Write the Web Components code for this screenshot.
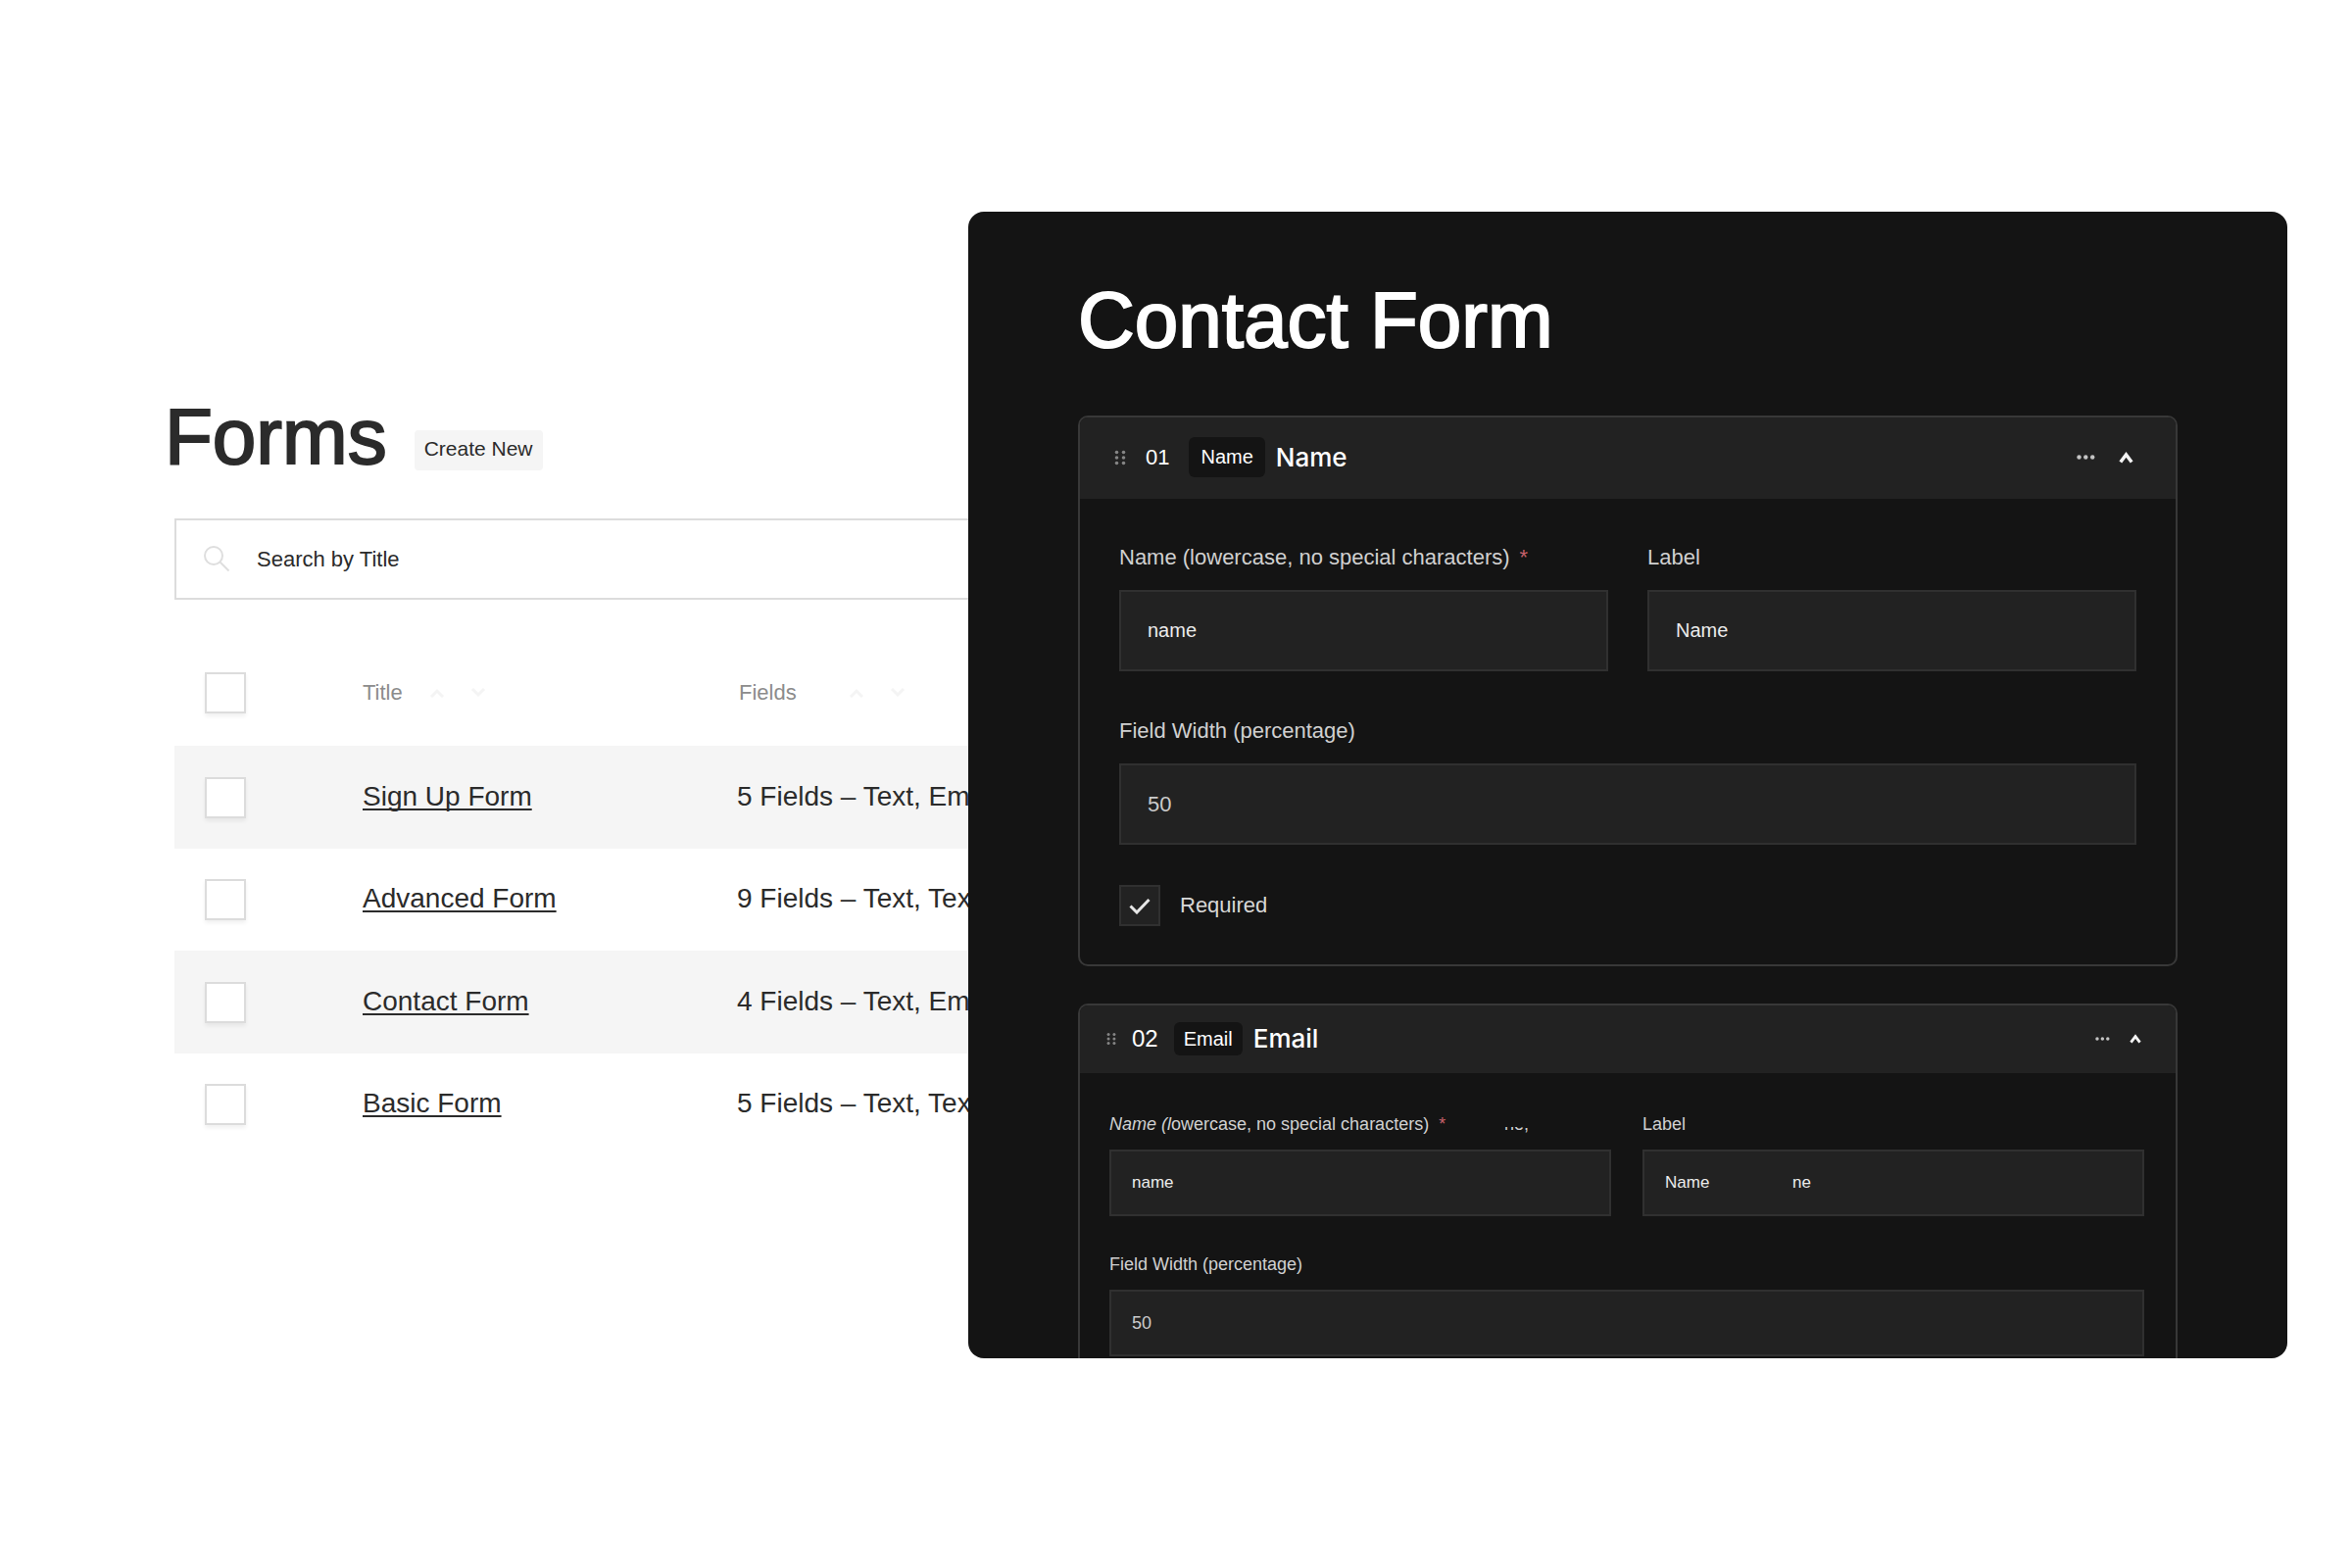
<!DOCTYPE html>
<html lang="en">
<head>
<meta charset="utf-8">
<title>Form Builder</title>
<style>
  body {
    margin: 0;
    background: #fff;
    color: #2b2b2b;
    font-family: "Liberation Sans", Arial, sans-serif;
    font-size: 22px;
  }
</style>
</head>
<body>
<form-builder-page>
  <forms-list slot="list"></forms-list>
  <form-panel slot="panel" heading="Contact Form">
    <block-card number="01" kind="Name" heading="Name">
      <text-field label="Name (lowercase, no special characters)" value="name" required></text-field>
      <text-field label="Label" value="Name"></text-field>
      <text-field class="wide" label="Field Width (percentage)" value="50" numeric></text-field>
      <check-field class="wide" label="Required"></check-field>
    </block-card>
    <block-card number="02" kind="Email" heading="Email" compact>
      <text-field label="Name (lowercase, no special characters)" value="name" required slanted label-echo="ne,"></text-field>
      <text-field label="Label" value="Name" value-echo="ne"></text-field>
      <text-field class="wide" label="Field Width (percentage)" value="50" numeric></text-field>
    </block-card>
  </form-panel>
</form-builder-page>

<script>
  class Base extends HTMLElement {
    connectedCallback() {
      if (!this.shadowRoot) this.attachShadow({ mode: 'open' }).innerHTML = this.render();
    }
    attr(name) { return this.getAttribute(name) || ''; }
  }

  customElements.define('form-builder-page', class extends Base {
    render() {
      return `
      <style>
        :host {
          display: grid;
          grid-template-columns: 988fr 1346fr 66fr;
          align-content: center;
          box-sizing: border-box;
          min-height: 100vh;
          padding-top: 2px;
        }
        ::slotted(*) { min-width: 0; }
      </style>
      <slot name="list"></slot>
      <slot name="panel"></slot>`;
    }
  });

  customElements.define('sort-arrows', class extends Base {
    render() {
      return `
      <style>
        :host { display: inline-flex; gap: 28px; }
        button { all: unset; display: block; width: 14px; height: 10px; }
        svg { display: block; fill: none; stroke: #f4f4f4; stroke-width: 3; }
      </style>
      <button type="button" aria-label="Sort ascending"><svg width="14" height="10" viewBox="0 0 14 10"><path d="M1 9 7 3l6 6"/></svg></button>
      <button type="button" aria-label="Sort descending"><svg width="14" height="10" viewBox="0 0 14 10"><path d="M1 1l6 6 6-6"/></svg></button>`;
    }
  });

  customElements.define('search-box', class extends Base {
    render() {
      return `
      <style>
        :host {
          display: flex;
          align-items: center;
          gap: 27px;
          box-sizing: border-box;
          height: 83px;
          padding-left: 28px;
          border: 2px solid #dcdcdc;
          border-right: 0;
        }
        svg { flex: none; fill: none; stroke: #dedede; stroke-width: 2; }
        input {
          flex: 1;
          min-width: 0;
          padding: 0;
          border: 0;
          outline: 0;
          background: none;
          font: inherit;
          color: inherit;
        }
        input::placeholder { color: #2b2b2b; opacity: 1; }
      </style>
      <svg width="27" height="27" viewBox="0 0 27 27" aria-hidden="true"><circle cx="10" cy="10" r="9"/><path d="M16.500 16.500 25.500 25.500"/></svg>
      <input type="text" placeholder="Search by Title" aria-label="Search by Title">`;
    }
  });

  customElements.define('forms-list', class extends Base {
    render() {
      const forms = [
        ['Sign Up Form', '5 Fields – Text, Ema'],
        ['Advanced Form', '9 Fields – Text, Tex'],
        ['Contact Form', '4 Fields – Text, Ema'],
        ['Basic Form', '5 Fields – Text, Tex']
      ];
      return `
      <style>
        :host { display: block; overflow: hidden; padding: 196px 0 0 178px; }
        header { display: flex; align-items: flex-end; gap: 28px; margin: 0 0 49px -10px; }
        h1 {
          margin: 0;
          font-size: 80px;
          line-height: 68px;
          font-weight: 400;
          -webkit-text-stroke: 2px;
        }
        header button {
          height: 41px;
          padding: 0 10px 4px;
          border: 0;
          border-radius: 4px;
          background: #f5f5f5;
          color: inherit;
          font: 21px "Liberation Sans", Arial, sans-serif;
        }
        table { width: 100%; margin-top: 41px; border-collapse: collapse; table-layout: fixed; }
        th, td { padding: 0; text-align: left; vertical-align: middle; font-weight: 400; white-space: nowrap; }
        thead tr { height: 108px; color: #8c8c8c; }
        tbody tr { height: 104px; font-size: 28px; }
        tbody tr:nth-child(odd) { height: 105px; background: #f5f5f5; }
        tbody td + td { padding-bottom: 2px; }
        .pick { width: 192px; }
        .title { width: 382px; }
        .head { display: flex; align-items: center; }
        .title .head { gap: 28px; }
        .fields .head { gap: 54px; padding-left: 2px; }
        input {
          appearance: none;
          display: block;
          box-sizing: border-box;
          width: 42px;
          height: 42px;
          margin: 0 0 0 31px;
          border: 2px solid #dcdcdc;
          background: #fff;
          box-shadow: 0 3px 4px rgba(0, 0, 0, .06);
        }
        a {
          color: inherit;
          text-decoration: underline 2px;
          text-underline-offset: 3px;
          text-decoration-skip-ink: none;
        }
      </style>
      <header><h1>Forms</h1><button type="button">Create New</button></header>
      <search-box></search-box>
      <table>
        <thead><tr>
          <th class="pick"><input type="checkbox" aria-label="Select all"></th>
          <th class="title"><div class="head">Title<sort-arrows></sort-arrows></div></th>
          <th class="fields"><div class="head">Fields<sort-arrows></sort-arrows></div></th>
        </tr></thead>
        <tbody>${forms.map(([title, fields]) => `
          <tr>
            <td><input type="checkbox" aria-label="Select ${title}"></td>
            <td><a href="#">${title}</a></td>
            <td>${fields}</td>
          </tr>`).join('')}
        </tbody>
      </table>`;
    }
  });

  customElements.define('form-panel', class extends Base {
    render() {
      return `
      <style>
        :host {
          display: block;
          box-sizing: border-box;
          overflow: hidden;
          padding: 63px 112px 0;
          border-radius: 16px;
          background: #141414;
          color: #fff;
        }
        h2 {
          margin: 0 0 49px;
          font-size: 80px;
          line-height: 96px;
          font-weight: 400;
          -webkit-text-stroke: 2px;
        }
        .blocks { display: grid; gap: 38px; }
      </style>
      <h2>${this.attr('heading')}</h2>
      <div class="blocks"><slot></slot></div>`;
    }
  });

  customElements.define('block-card', class extends Base {
    render() {
      return `
      <style>
        :host {
          --label-size: 22px;
          --label-line: 26px;
          --label-gap: 20px;
          --value-size: 20px;
          --number-size: 22px;
          --input-height: 83px;
          --input-pad: 27px;
          display: block;
          border: 2px solid #383838;
          border-radius: 10px;
          overflow: hidden;
        }
        :host([compact]) {
          --label-size: 18px;
          --label-line: 22px;
          --label-gap: 15px;
          --value-size: 17px;
          --number-size: 18px;
          --input-height: 68px;
          --input-pad: 21px;
          border-bottom: 0;
          border-radius: 10px 10px 0 0;
        }
        header {
          display: flex;
          align-items: center;
          gap: 20px;
          box-sizing: border-box;
          height: 83px;
          padding: 0 43px 2px 35px;
          background: #222;
        }
        .name { display: flex; align-items: center; gap: 11px; }
        .badge {
          padding: 0 12px;
          border-radius: 6px;
          background: #141414;
          font-size: 20px;
          line-height: 41px;
        }
        h3 { margin: 0; font: 500 26px/32px Inter, "Liberation Sans", sans-serif; }
        .tools { display: flex; align-items: center; gap: 24px; margin-left: auto; }
        button { all: unset; display: block; }
        svg { display: block; }
        .grip { fill: #858585; width: 12px; height: 16px; }
        .dots { fill: #c4c4c4; width: 19px; height: 5px; }
        .fold { fill: none; stroke: #f4f4f4; stroke-width: 3.500; width: 15px; height: 12px; }
        .body {
          display: grid;
          grid-template-columns: repeat(2, minmax(0, 1fr));
          gap: 48px 40px;
          padding: 47px 40px 39px;
        }
        ::slotted(.wide) { grid-column: 1 / -1; }
        ::slotted(check-field) { margin-top: -7px; }
        :host([compact]) header { gap: 16px; height: 69px; padding: 0 35px 2px 27px; }
        :host([compact]) .number { font-size: 24px; }
        :host([compact]) .badge { padding: 0 10px; line-height: 34px; }
        :host([compact]) .tools { gap: 20px; }
        :host([compact]) .grip { width: 10px; height: 14px; }
        :host([compact]) .dots { width: 15px; height: 4px; }
        :host([compact]) .fold { width: 12px; height: 10px; }
        :host([compact]) .body { gap: 38px 32px; padding: 41px 32px 2px 30px; }
      </style>
      <header>
        <svg class="grip" viewBox="0 0 12 16" aria-hidden="true"><circle cx="2.500" cy="2.500" r="1.800"/><circle cx="9.500" cy="2.500" r="1.800"/><circle cx="2.500" cy="8" r="1.800"/><circle cx="9.500" cy="8" r="1.800"/><circle cx="2.500" cy="13.500" r="1.800"/><circle cx="9.500" cy="13.500" r="1.800"/></svg>
        <span class="number">${this.attr('number')}</span>
        <div class="name"><span class="badge">${this.attr('kind')}</span><h3>${this.attr('heading')}</h3></div>
        <div class="tools">
          <button type="button" aria-label="More"><svg class="dots" viewBox="0 0 19 5"><circle cx="2.500" cy="2.500" r="2.200"/><circle cx="9.300" cy="2.500" r="2.200"/><circle cx="16.200" cy="2.500" r="2.200"/></svg></button>
          <button type="button" aria-label="Collapse"><svg class="fold" viewBox="0 0 15 12"><path d="M1.800 10.500 7.500 3l5.700 7.500"/></svg></button>
        </div>
      </header>
      <div class="body"><slot></slot></div>`;
    }
  });

  customElements.define('text-field', class extends Base {
    render() {
      const label = this.attr('label');
      const text = this.hasAttribute('slanted')
        ? label.replace(/^(Name \(l)/, '<i>$1</i>')
        : label;
      const star = this.hasAttribute('required') ? '<span class="star">*</span>' : '';
      const labelEcho = this.attr('label-echo');
      const valueEcho = this.attr('value-echo');
      return `
      <style>
        :host { display: flex; flex-direction: column; gap: var(--label-gap); }
        .caption { position: relative; font-size: var(--label-size); line-height: var(--label-line); color: #d0d0d0; }
        .star { margin-left: 10px; color: #c4606a; }
        .box { position: relative; display: flex; }
        input {
          flex: 1;
          min-width: 0;
          box-sizing: border-box;
          height: var(--input-height);
          padding: 0 var(--input-pad);
          border: 2px solid #303030;
          border-radius: 0;
          outline: 0;
          background: #222;
          color: #ececec;
          font: var(--value-size) "Liberation Sans", Arial, sans-serif;
        }
        :host([numeric]) input { color: #cbcbcb; font-size: var(--number-size); }
        .label-echo { position: absolute; left: 403px; bottom: 0; height: 8px; overflow: hidden; }
        .label-echo span { display: block; margin-top: -14px; }
        .value-echo { position: absolute; left: 153px; top: 0; font-size: var(--value-size); line-height: var(--input-height); color: #ececec; }
      </style>
      <div class="caption">
        <label for="value">${text}${star}</label>
        ${labelEcho && `<div class="label-echo" aria-hidden="true"><span>${labelEcho}</span></div>`}
      </div>
      <div class="box">
        <input id="value" type="text" value="${this.attr('value')}">
        ${valueEcho && `<span class="value-echo" aria-hidden="true">${valueEcho}</span>`}
      </div>`;
    }
  });

  customElements.define('check-field', class extends Base {
    render() {
      return `
      <style>
        :host { display: flex; align-items: center; gap: 20px; color: #d8d8d8; }
        .box { display: grid; }
        .box > * { grid-area: 1 / 1; place-self: center; }
        input {
          appearance: none;
          box-sizing: border-box;
          width: 42px;
          height: 42px;
          margin: 0;
          border: 2px solid #303030;
          background: #222;
        }
        svg { z-index: 1; pointer-events: none; fill: none; stroke: #e6e6e6; stroke-width: 3; }
      </style>
      <span class="box">
        <input id="check" type="checkbox" checked>
        <svg width="22" height="18" viewBox="0 0 22 18" aria-hidden="true"><path d="M1.500 9.500 8 16 20.500 3"/></svg>
      </span>
      <label for="check">${this.attr('label')}</label>`;
    }
  });
</script>
</body>
</html>
